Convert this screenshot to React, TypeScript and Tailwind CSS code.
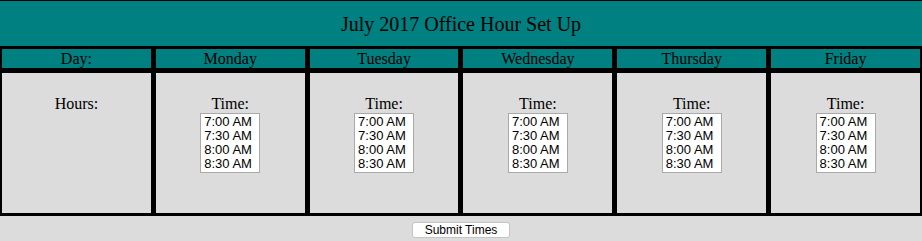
const days = ['Monday', 'Tuesday', 'Wednesday', 'Thursday', 'Friday']
const times = ['7:00 AM', '7:30 AM', '8:00 AM', '8:30 AM']

function TimeList() {
  return (
    <div className="mx-auto w-[60px] h-[60px] bg-white border border-[#a9a9a9] py-px pl-[3px] text-left font-['Liberation_Sans',Arial,sans-serif] text-[13px] leading-[14px] text-black">
      {times.map((t) => (
        <div key={t}>{t}</div>
      ))}
    </div>
  )
}

export default function App() {
  return (
    <div className="min-h-[241px] bg-[#dcdcdc] font-['Liberation_Serif','Times_New_Roman',serif] text-black">
      <div className="h-[46px] border-t border-black bg-[#008080] flex items-center justify-center text-[20px]">
        July 2017 Office Hour Set Up
      </div>

      <div className="bg-black px-[2px] py-[3px] grid grid-cols-6 gap-[5px]">
        <div className="h-[19px] bg-[#008080] text-center text-[16px] leading-[19px]">Day:</div>
        {days.map((d) => (
          <div key={d} className="h-[19px] bg-[#008080] text-center text-[16px] leading-[19px]">
            {d}
          </div>
        ))}

        <div className="h-[140px] bg-[#dcdcdc] text-center pt-[21px]">
          <div className="text-[16px] leading-[19px]">Hours:</div>
        </div>
        {days.map((d) => (
          <div key={d} className="h-[140px] bg-[#dcdcdc] text-center pt-[21px]">
            <div className="text-[16px] leading-[19px]">Time:</div>
            <TimeList />
          </div>
        ))}
      </div>

      <div className="flex justify-center pt-[6px]">
        <button className="w-[98px] h-[16px] bg-white border border-[#c4c4c4] rounded-[3px] font-['Liberation_Sans',Arial,sans-serif] text-[12px] leading-[14px] text-black">
          Submit Times
        </button>
      </div>
    </div>
  )
}
